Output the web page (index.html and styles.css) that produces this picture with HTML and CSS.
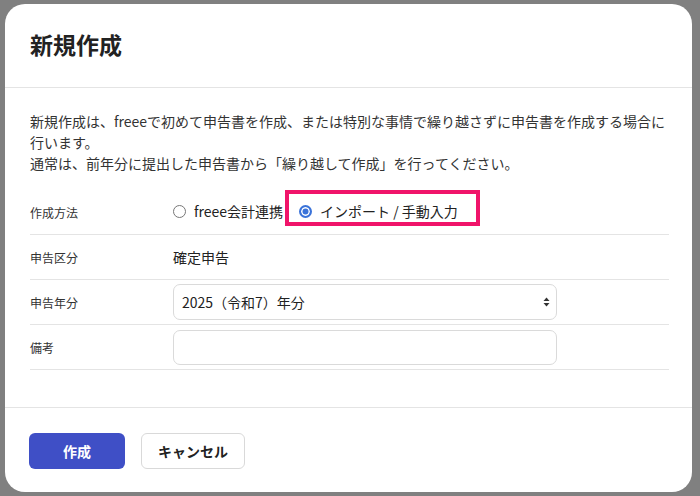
FILE: index.html
```html
<!DOCTYPE html>
<html lang="ja">
<head>
<meta charset="utf-8">
<link rel="stylesheet" href="styles.css">
</head>
<body>
<div class="dialog">
  <div class="header"><h1 class="title">新規作成</h1></div>
  <div class="body">
    <p class="intro">新規作成は、freeeで初めて申告書を作成、または特別な事情で繰り越さずに申告書を作成する場合に行います。<br>通常は、前年分に提出した申告書から「繰り越して作成」を行ってください。</p>
    <div class="form">
      <div class="row">
        <div class="label">作成方法</div>
        <div class="value radios">
          <label class="radio"><span class="dot"></span><span>freee会計連携</span></label>
          <label class="radio checked"><span class="dot"></span><span>インポート / 手動入力</span><span class="highlight"></span></label>
        </div>
      </div>
      <div class="row">
        <div class="label">申告区分</div>
        <div class="value">確定申告</div>
      </div>
      <div class="row">
        <div class="label">申告年分</div>
        <div class="value">
          <div class="select"><span>2025（令和7）年分</span>
            <svg width="7" height="10" viewBox="0 0 7 10"><path d="M3.5 0.5 L6.5 4 L0.5 4 Z" fill="#333"/><path d="M0.5 6 L6.5 6 L3.5 9.5 Z" fill="#333"/></svg>
          </div>
        </div>
      </div>
      <div class="row">
        <div class="label">備考</div>
        <div class="value"><div class="input"></div></div>
      </div>
    </div>
  </div>
  <div class="footer">
    <button class="btn primary">作成</button>
    <button class="btn secondary">キャンセル</button>
  </div>
</div>
</body>
</html>
```
FILE: styles.css
```css
* { box-sizing: border-box; }
html, body { margin: 0; height: 100%; }
body {
  background: #808080;
  padding: 4px 8px 4px 5px;
  font-family: "Noto Sans CJK JP", "Noto Sans", sans-serif;
  color: #333;
}
.dialog {
  width: 687px;
  height: 488px;
  background: #fff;
  border-radius: 20px;
  display: flex;
  flex-direction: column;
}
.header {
  height: 84px;
  border-bottom: 1px solid #e4e4e4;
  display: flex;
  align-items: center;
  padding: 0 25px 4px;
}
.title {
  margin: 0;
  font-size: 23px;
  font-weight: 700;
  color: #222;
  line-height: 30px;
}
.body {
  padding: 23px 23px 0 25px;
  flex: 1;
  border-bottom: 1px solid #e4e4e4;
}
.intro {
  margin: 0 0 16px;
  font-size: 14px;
  line-height: 21px;
  color: #333;
}
.row {
  display: flex;
  align-items: center;
  height: 45px;
  border-bottom: 1px solid #e4e4e4;
  padding: 4px 0;
}
.label {
  width: 143px;
  font-size: 12px;
  color: #333;
}
.value {
  font-size: 14px;
  color: #222;
  flex: 1;
}
.radios {
  display: flex;
  align-items: center;
  gap: 16px;
  margin-top: -2px;
}
.radio {
  position: relative;
  display: flex;
  align-items: center;
  gap: 8px;
}
.dot {
  width: 13px;
  height: 13px;
  border-radius: 50%;
  border: 1px solid #777;
  background: #fff;
}
.radio.checked .dot {
  border: 2px solid #3b73d9;
  box-shadow: inset 0 0 0 1.5px #fff;
  background: #3b73d9;
}
.highlight {
  position: absolute;
  left: -14px;
  top: -11px;
  width: 195px;
  height: 36px;
  border: 4px solid #f0146a;
}
.select, .input {
  width: 384px;
  height: 36px;
  border: 1px solid #dadada;
  border-radius: 7px;
  display: flex;
  align-items: center;
  justify-content: space-between;
  padding: 0 6px 0 8px;
  font-size: 14px;
  color: #222;
}
.input { height: 35px; }
.footer {
  height: 84px;
  display: flex;
  align-items: center;
  gap: 16px;
  padding: 2px 24px 0;
}
.btn {
  height: 36px;
  border-radius: 6px;
  font-family: inherit;
  font-size: 14px;
  font-weight: 700;
  cursor: pointer;
}
.primary {
  width: 96px;
  background: #3f4fc6;
  border: none;
  color: #fff;
}
.secondary {
  width: 104px;
  background: #fff;
  border: 1px solid #d9d9d9;
  color: #222;
}
```
